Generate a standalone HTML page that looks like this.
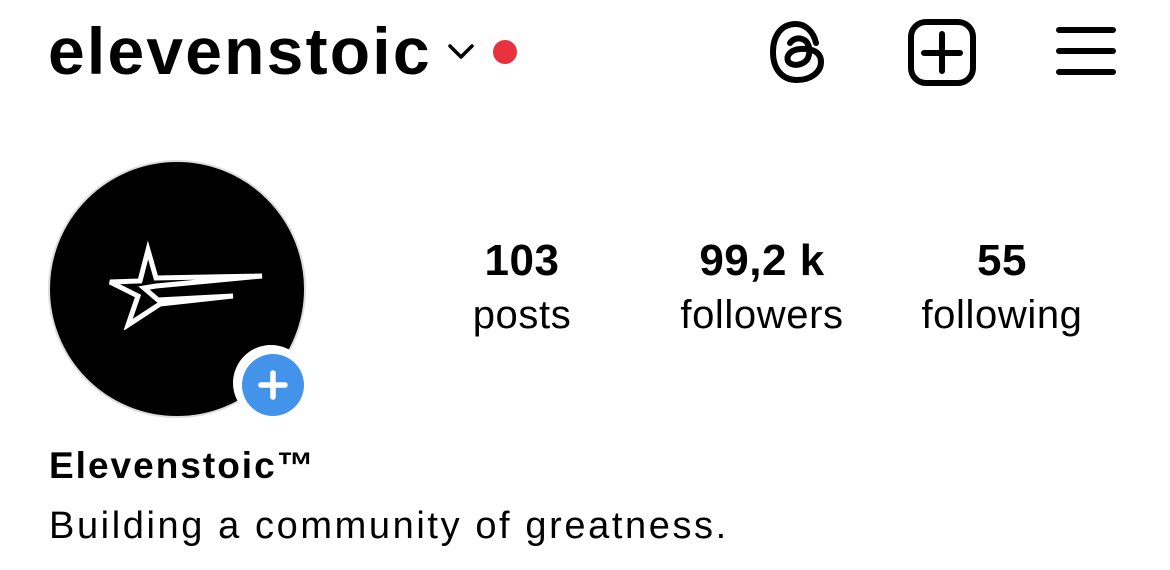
<!DOCTYPE html>
<html><head><meta charset="utf-8"><style>
body{margin:0;width:1170px;height:570px;background:#fff;position:relative;overflow:hidden;font-family:"Liberation Sans",Arial,sans-serif;color:#000}
.a{position:absolute;white-space:nowrap}
.t{left:48px;top:13px;font-size:66px;font-weight:bold;letter-spacing:2.2px}
.n{font-size:44px;font-weight:bold;text-align:center;width:260px;top:236px;letter-spacing:0.5px}
.l{font-size:40px;text-align:center;width:260px;top:293px;letter-spacing:0.6px}
</style></head><body>
<div class="a t">elevenstoic</div>
<svg class="a" style="left:442px;top:40px" width="40" height="26" viewBox="0 0 40 26"><path d="M8 6 L19 17 L30 6" fill="none" stroke="#000" stroke-width="3.5" stroke-linecap="round" stroke-linejoin="round"/></svg>
<div class="a" style="left:493px;top:40px;width:24px;height:24px;border-radius:50%;background:#e8333f"></div>
<svg class="a" style="left:764px;top:16px" width="68" height="70" viewBox="0 0 68 70"><path d="M52 27 C49 14 40 8 32 8 C17 8 9 20 9 36 C9 53 18 64 33 64 C47 64 57 56 57 46 C57 36 48 32 36 33 C26 34 22 40 24 45 C27 51 40 50 44 42 C47 34 45 25 38 23 C33 21 28 24 26 27" fill="none" stroke="#000" stroke-width="6" stroke-linecap="round"/></svg>
<svg class="a" style="left:906px;top:17px" width="72" height="70" viewBox="0 0 72 70"><rect x="5" y="5" width="62" height="61" rx="15" fill="none" stroke="#000" stroke-width="6"/><path d="M36 17V54M18 36H54" stroke="#000" stroke-width="6" stroke-linecap="round"/></svg>
<svg class="a" style="left:1052px;top:20px" width="70" height="62" viewBox="0 0 70 62"><path d="M7 10H61M7 31H61M7 52H61" stroke="#000" stroke-width="6" stroke-linecap="round"/></svg>
<div class="a" style="left:48px;top:160px;width:254px;height:254px;border-radius:50%;background:#000;border:2px solid #ddd"></div>
<svg class="a" style="left:100px;top:240px" width="170" height="90" viewBox="0 0 170 90"><path d="M48 10 L56 38 L162 36 L56 46 L44 48 L58 60 L133 56 L60 64 L28 85 L38 56 L10 42 L40 41 Z" fill="none" stroke="#fff" stroke-width="5" stroke-linejoin="miter"/></svg>
<div class="a" style="left:233px;top:345px;width:76px;height:76px;border-radius:50%;background:#fff"></div>
<div class="a" style="left:242px;top:354px;width:62px;height:62px;border-radius:50%;background:#4393eb"></div>
<svg class="a" style="left:242px;top:354px" width="62" height="62"><path d="M31 19V43M19 31H43" stroke="#fff" stroke-width="5.5" stroke-linecap="round"/></svg>
<div class="a n" style="left:392px">103</div><div class="a l" style="left:392px">posts</div>
<div class="a n" style="left:632px">99,2 k</div><div class="a l" style="left:632px">followers</div>
<div class="a n" style="left:872px">55</div><div class="a l" style="left:872px">following</div>
<div class="a" style="left:49px;top:445px;font-size:37px;font-weight:bold;letter-spacing:2px">Elevenstoic™</div>
<div class="a" style="left:49px;top:505px;font-size:38px;letter-spacing:2.6px">Building a community of greatness.</div>
</body></html>
